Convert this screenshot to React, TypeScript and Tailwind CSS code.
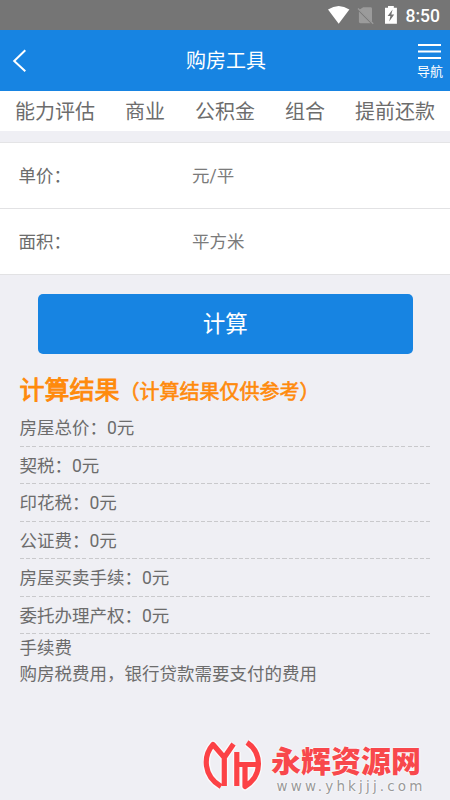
import { useState } from "react";

const tabs = ["能力评估", "商业", "公积金", "组合", "提前还款"];

const fields = [
  { label: "单价：", placeholder: "元/平" },
  { label: "面积：", placeholder: "平方米" },
];

const results = [
  { label: "房屋总价", value: 0 },
  { label: "契税", value: 0 },
  { label: "印花税", value: 0 },
  { label: "公证费", value: 0 },
  { label: "房屋买卖手续", value: 0 },
  { label: "委托办理产权", value: 0 },
];

function StatusBar() {
  return (
    <div className="flex h-[30px] items-center bg-[#757575] text-white">
      <svg className="ml-[327px] h-[30px] w-[72px]" viewBox="327 0 72 30">
        <path d="M328 9.6Q338.700 2.600 349.400 9.600L338.700 23.700Z" fill="#fff" />
        <path d="M363.200 7.200h7.400q1.400 0 1.400 1.400v13.500L359.300 9.700ZM358.900 11.500 370.600 23.200H360.300q-1.400 0-1.400-1.400Z" fill="#9b9b9b" />
        <path d="M358 8.500 373.200 23.700" stroke="#9b9b9b" strokeWidth="1.300" />
        <path d="M385 7.700h3V6h5.800v1.700h3.100v16H385Z" fill="#fff" />
        <path d="m392.600 9.500-5 6.500h2.800l-1.200 5.500 5-6.900h-2.900Z" fill="#757575" />
      </svg>
      <span className="ml-[6.5px] mt-[3px] font-['Roboto'] text-[17.5px] font-medium leading-none">
        8:50
      </span>
    </div>
  );
}

function Header() {
  return (
    <header className="grid h-[61px] grid-cols-[60px_1fr_60px] bg-[#1784e2] text-white">
      <button type="button" aria-label="返回" className="flex items-center pl-[12px]">
        <svg width="15" height="24" viewBox="0 0 15 24" fill="none">
          <path d="M13.300 1.200 2.200 12 13.300 22.300" stroke="#fff" strokeWidth="2" />
        </svg>
      </button>
      <h1 className="pl-[2px] text-center text-[20px] leading-[62px]">购房工具</h1>
      <button type="button" className="flex flex-col items-end pr-[7px] pt-[13px]">
        <svg className="mr-[2px]" width="23" height="17" viewBox="0 0 23 17">
          <path d="M0 2h23M0 8.500h23M0 15h23" stroke="#fff" strokeWidth="2" />
        </svg>
        <span className="mt-[4px] text-[13px] leading-[16px]">导航</span>
      </button>
    </header>
  );
}

function Watermark() {
  return (
    <div className="absolute bottom-0 left-[203px] flex h-[62px] w-[240px]">
      <svg width="60" height="62" viewBox="203 738 60 62" fill="none" strokeLinejoin="round">
        <g stroke="#fff" strokeOpacity=".7" strokeWidth="8">
          <path d="M221 786.500C203 776 203 756 213 744.500L224.300 757.500 233.500 744M224.300 757V786" />
          <path d="M247 742.500C262.500 753 262.500 776 245 786.500V764.500M236.800 752V786M237 764.500H257" />
        </g>
        <g stroke="#fc4246" strokeWidth="5.200">
          <path d="M221 786.500C203 776 203 756 213 744.500L224.300 757.500 233.500 744M224.300 757V786" />
          <path d="M247 742.500C262.500 753 262.500 776 245 786.500V764.500M236.800 752V786M237 764.500H257" />
        </g>
      </svg>
      <div className="ml-[8px] whitespace-nowrap pt-[5px]">
        <p className="text-[30px] font-black leading-[37px] text-[#f8484c] [text-shadow:0_0_2px_white,0_0_2px_white]">
          永辉资源网
        </p>
        <p className="ml-[5.5px] font-['DejaVu_Sans'] text-[13.5px] leading-[13px] tracking-[3.15px] text-[#999] [text-shadow:0_0_2px_white,0_0_2px_white]">
          www.yhkjjj.com
        </p>
      </div>
    </div>
  );
}

export default function App() {
  const [values, setValues] = useState<Record<string, string>>({});

  return (
    <div className="relative h-[800px] w-[450px] overflow-hidden bg-[#efeff4] font-['Roboto','Noto_Sans_CJK_SC',sans-serif] text-[17.5px] text-[#6c6c6c]">
      <StatusBar />
      <Header />

      <nav className="flex h-10 items-center justify-between bg-white px-[15px] text-[20px]">
        {tabs.map((tab) => (
          <a key={tab} className="whitespace-nowrap pt-[2px] leading-10">
            {tab}
          </a>
        ))}
      </nav>

      <div className="mt-[11px] border-t border-[#e4e4e6] bg-white">
        {fields.map((field) => (
          <label
            key={field.label}
            className="flex h-[66px] items-center border-b border-[#e2e2e4] pl-[18.5px] pt-[2px]"
          >
            <span className="w-[173.5px]">{field.label}</span>
            <input
              value={values[field.label] ?? ""}
              onChange={(event) =>
                setValues({ ...values, [field.label]: event.target.value })
              }
              placeholder={field.placeholder}
              className="w-[220px] bg-transparent outline-none placeholder:text-[#7b7b7b]"
            />
          </label>
        ))}
      </div>

      <button
        type="button"
        className="ml-[37.5px] mt-[19px] block h-[60px] w-[375.5px] rounded-[5px] bg-[#1784e2] pt-[2px] text-[22.5px] text-white"
      >
        计算
      </button>

      <section className="ml-[19.5px] mr-[19px] mt-[18px]">
        <h2 className="h-[37px] whitespace-nowrap text-[25px] font-normal leading-[38px] text-[#ff8a0c] [-webkit-text-stroke:0.9px_#ff8a0c]">
          计算结果
          <span className="text-[20px] [-webkit-text-stroke:0.6px_#ff8a0c]">
            （计算结果仅供参考）
          </span>
        </h2>
        <ul>
          {results.map((item) => (
            <li key={item.label} className="h-[37.5px] leading-[39px]">
              <div className="h-[36.5px]">
                {item.label}：{item.value}元
              </div>
              <div className="h-px bg-[repeating-linear-gradient(90deg,#c9c9cc_0_4px,transparent_4px_6.25px)]" />
            </li>
          ))}
        </ul>
        <div className="pt-px leading-[26.25px]">
          <p>手续费</p>
          <p>购房税费用，银行贷款需要支付的费用</p>
        </div>
      </section>

      <Watermark />
    </div>
  );
}
